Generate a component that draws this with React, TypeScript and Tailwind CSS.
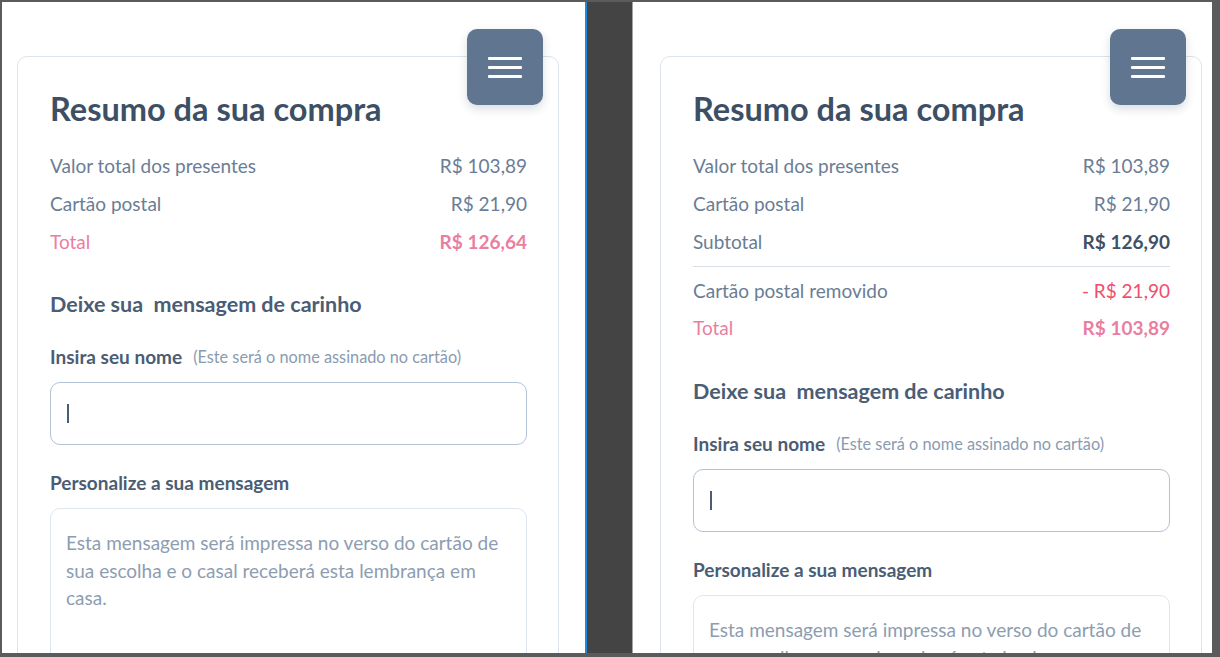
import React from 'react';

type Row = { label: string; value: string; tone?: 'normal' | 'strong' | 'total' | 'minus' };

const MenuButton = () => (
    <div className="absolute -top-[28px] right-[15px] w-[76px] h-[76px] rounded-[10px] bg-[#5f7590] shadow-[0_4px_10px_rgba(40,60,90,0.18)] flex flex-col items-center justify-center gap-[6px]">
        <span className="block w-[34px] h-[3px] bg-white rounded-[1px]" />
        <span className="block w-[34px] h-[3px] bg-white rounded-[1px]" />
        <span className="block w-[34px] h-[3px] bg-white rounded-[1px]" />
    </div>
);

const SummaryRow = ({ label, value, tone = 'normal' }: Row) => {
    const labelCls = tone === 'total' ? 'text-[#ea7ea1]' : 'text-[#6a7d94]';
    let valueCls = 'text-[#6a7d94]';
    if (tone === 'strong') valueCls = 'text-[#3f5167] font-bold';
    if (tone === 'total') valueCls = 'text-[#ea7ea1] font-bold';
    if (tone === 'minus') valueCls = 'text-[#f24d6c]';
    return (
        <div className="h-[38px] flex items-center justify-between text-[19px]">
            <span className={labelCls}>{label}</span>
            <span className={valueCls}>{value}</span>
        </div>
    );
};

const MessageForm = () => (
    <div>
        <h3 className="h-[30px] flex items-center text-[21.5px] font-bold text-[#4a5d74] whitespace-pre">
            Deixe sua  mensagem de carinho
        </h3>
        <div className="mt-[26px] h-[24px] flex items-center gap-[11px]">
            <span className="text-[19px] font-bold text-[#4a5d74]">Insira seu nome</span>
            <span className="text-[16.3px] text-[#8a9bb0]">(Este será o nome assinado no cartão)</span>
        </div>
        <div className="mt-[13px] h-[63px] rounded-[10px] border border-[#b3c2d4] flex items-center pl-[16px]">
            <span className="block w-[2px] h-[19px] bg-[#4a5d74]" />
        </div>
        <div className="mt-[26px] h-[24px] flex items-center text-[19px] font-bold text-[#4a5d74]">
            Personalize a sua mensagem
        </div>
        <div className="mt-[13px] h-[200px] rounded-[10px] border border-[#dfe6ee] px-[15px] pt-[20px] text-[19px] leading-[27.5px] text-[#8d9db1]">
            Esta mensagem será impressa no verso do cartão de sua escolha e o casal receberá esta lembrança em casa.
        </div>
    </div>
);

const Card = ({ children }: { children: React.ReactNode }) => (
    <div className="relative mt-[54px] w-[542px] rounded-[10px] border border-[#dde4ec] bg-white px-[31px] pl-[32px] pt-[32px] pb-10">
        <MenuButton />
        <h2 className="h-[40px] flex items-center text-[32.5px] font-bold text-[#3d4f64]">Resumo da sua compra</h2>
        <div className="mt-[18px]">{children}</div>
    </div>
);

export default function App() {
    return (
        <div
            className="w-[1220px] h-[657px] overflow-hidden bg-[#5b5b5b] pt-[2px] pl-[2px] pr-[8px] pb-[4px]"
            style={{ fontFamily: 'Lato, "Open Sans", sans-serif' }}
        >
            <div className="flex h-full">
                <div className="w-[583px] h-full bg-white pl-[15px] overflow-hidden">
                    <Card>
                        <SummaryRow label="Valor total dos presentes" value="R$ 103,89" />
                        <SummaryRow label="Cartão postal" value="R$ 21,90" />
                        <SummaryRow label="Total" value="R$ 126,64" tone="total" />
                        <div className="mt-[28px]">
                            <MessageForm />
                        </div>
                    </Card>
                </div>
                <div className="w-[2px] h-full bg-[#1e88e5]" />
                <div className="w-[45px] h-full bg-[#444444]" />
                <div className="w-[1px] h-full bg-[#a3a3a3]" />
                <div className="flex-1 h-full bg-white pl-[27px] overflow-hidden">
                    <Card>
                        <SummaryRow label="Valor total dos presentes" value="R$ 103,89" />
                        <SummaryRow label="Cartão postal" value="R$ 21,90" />
                        <SummaryRow label="Subtotal" value="R$ 126,90" tone="strong" />
                        <div className="mt-[5px] h-px bg-[#d8dee6]" />
                        <div className="mt-[5px]">
                            <SummaryRow label="Cartão postal removido" value="- R$ 21,90" tone="minus" />
                            <div className="-mt-[1px]">
                                <SummaryRow label="Total" value="R$ 103,89" tone="total" />
                            </div>
                        </div>
                        <div className="mt-[29px]">
                            <MessageForm />
                        </div>
                    </Card>
                </div>
            </div>
        </div>
    );
}
